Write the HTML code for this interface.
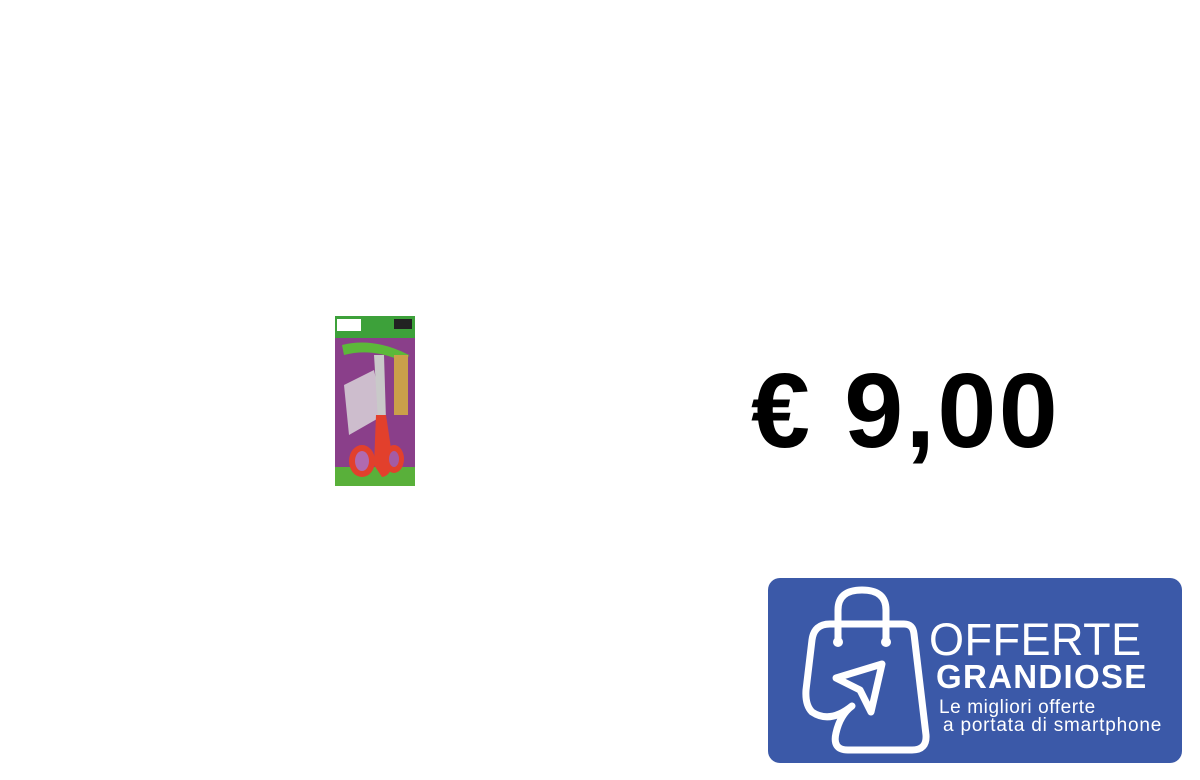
<!DOCTYPE html>
<html><head><meta charset="utf-8"><style>
html,body{margin:0;padding:0;background:#fff;width:1200px;height:780px;overflow:hidden;position:relative;font-family:"Liberation Sans",sans-serif}
.price{position:absolute;left:751px;top:351px;font-size:106px;font-weight:bold;color:#000;letter-spacing:2.4px;line-height:120px}
.banner{position:absolute;left:768px;top:578px;width:414px;height:185px;background:#3b59a8;border-radius:12px}
.t{position:absolute;color:#fff;white-space:nowrap}
</style></head><body>
<svg style="position:absolute;left:334px;top:315px" width="82" height="172" viewBox="0 0 82 172">
<rect x="1" y="1" width="80" height="170" rx="2" fill="#8a3f8a"/>
<rect x="1" y="1" width="80" height="22" fill="#3da13a"/>
<rect x="1" y="152" width="80" height="19" fill="#59b03a"/>
<rect x="3" y="4" width="24" height="12" fill="#fff"/>
<rect x="60" y="4" width="18" height="10" fill="#222"/>
<path d="M8 30 Q40 22 75 40 L72 48 Q40 32 10 40Z" fill="#5cb83a"/>
<rect x="60" y="40" width="14" height="60" fill="#caa04a"/>
<path d="M10 70 L40 55 L50 100 L15 120Z" fill="#ddd" opacity=".8"/>
<path d="M40 40 L50 40 L52 105 L44 105Z" fill="#c9c9c9"/>
<path d="M42 100 L52 100 L58 140 Q60 160 48 162 L40 150Z" fill="#e2402c"/>
<ellipse cx="28" cy="146" rx="13" ry="16" fill="#e2402c"/>
<ellipse cx="28" cy="146" rx="7" ry="10" fill="#b06ab0"/>
<ellipse cx="60" cy="144" rx="10" ry="14" fill="#e2402c"/>
<ellipse cx="60" cy="144" rx="5" ry="8" fill="#a45ba4"/>
</svg>
<div class="price">€ 9,00</div>
<div class="banner">
<svg style="position:absolute;left:0;top:0" width="414" height="185" viewBox="768 578 414 185" fill="none" stroke="#fff" stroke-width="7" stroke-linecap="round" stroke-linejoin="round">
<path d="M838 640 V610 Q838 590 862 590 Q886 590 886 610 V640"/>
<circle cx="838" cy="642" r="5" fill="#fff" stroke="none"/>
<circle cx="886" cy="642" r="5" fill="#fff" stroke="none"/>
<path d="M830 624 H904 Q913 624 914 634 L926 735 Q927 750 912 750 H848 Q832 750 836 733 Q840 715 852 706 Q830 724 812 712 Q805 705 806 690 L812 640 Q814 624 830 624Z"/>
<path d="M836 678 L882 664 L871 712 L860 690Z"/>
</svg>
<div class="t" style="left:161px;top:36px;font-size:45px;letter-spacing:0.5px;font-weight:normal">OFFERTE</div>
<div class="t" style="left:168px;top:80px;font-size:33px;font-weight:bold;letter-spacing:1.3px">GRANDIOSE</div>
<div class="t" style="left:171px;top:119px;font-size:19px;letter-spacing:0.6px">Le migliori offerte</div>
<div class="t" style="left:175px;top:137px;font-size:19px;letter-spacing:0.8px">a portata di smartphone</div>
</div>
</body></html>
